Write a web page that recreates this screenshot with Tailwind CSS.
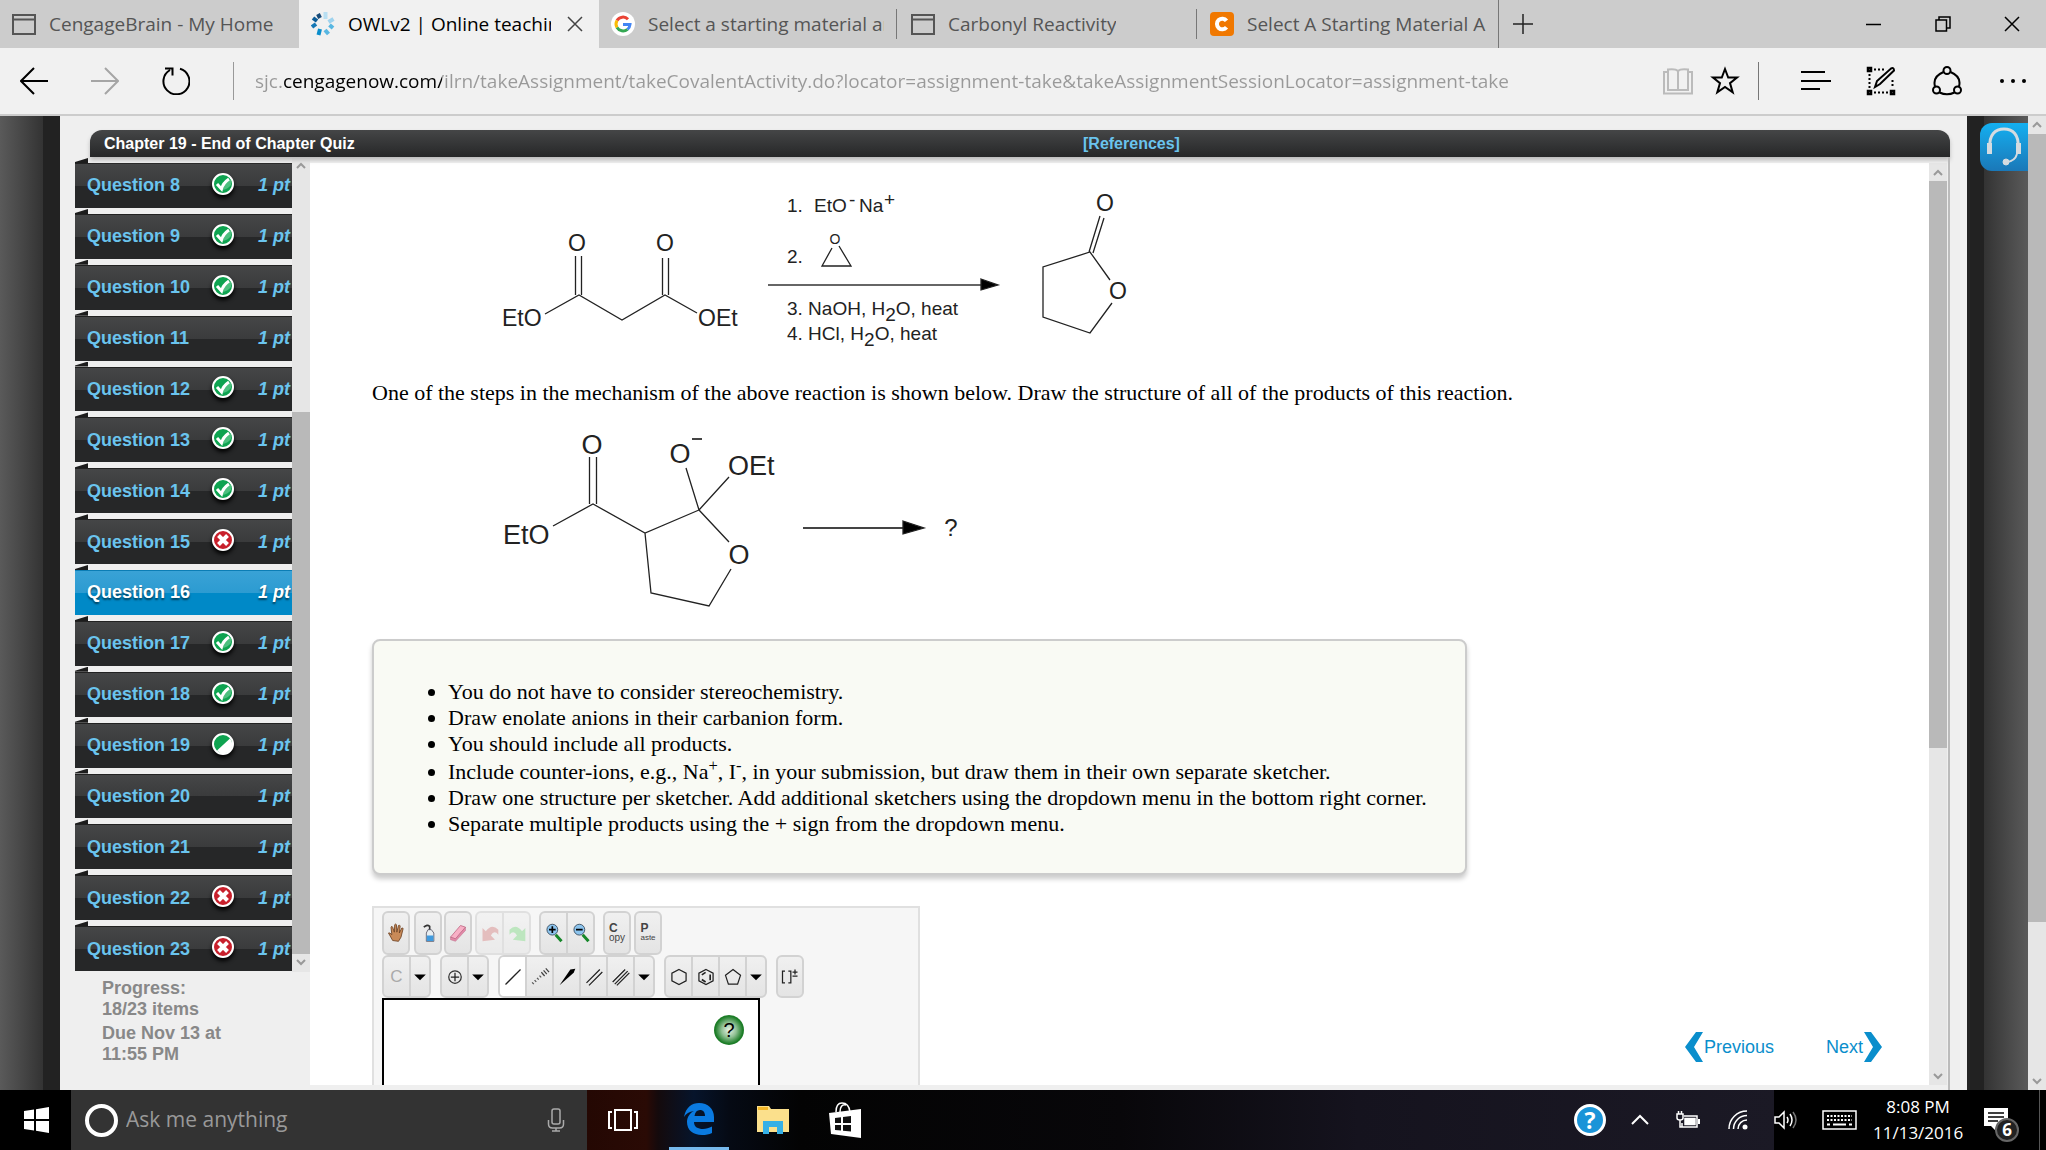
<!DOCTYPE html>
<html lang="en">
<head>
<meta charset="utf-8">
<title>OWLv2 | Online teaching and learning resource</title>
<script src="https://cdn.jsdelivr.net/npm/@tailwindcss/browser@4"></script>
</head>
<body class="h-screen flex flex-col overflow-hidden bg-[#efefef] font-['Liberation_Sans',sans-serif] text-black">

<!-- Tab strip -->
<nav aria-label="Tabs" class="flex h-12 shrink-0 bg-[#ccc] font-['Open_Sans',sans-serif] text-[19px] text-[#555]">
  <a href="#" class="flex w-[299px] items-center gap-[13px] pl-3 pr-4">
    <svg class="h-[22px] w-6 shrink-0" viewBox="0 0 24 22" fill="none" stroke="#555" stroke-width="2"><path d="M1 2h22v19H1zM1 6.500h22"/></svg>
    <span class="overflow-hidden whitespace-nowrap">CengageBrain - My Home</span>
  </a>
  <div class="flex w-[300px] items-center bg-[#f1f1f1] pl-3 pr-4 text-black">
    <a href="#" class="flex min-w-0 flex-1 items-center gap-[13px]">
      <svg class="h-6 w-6 shrink-0" viewBox="0 0 24 24"><g stroke-width="4"><path d="M14.500 0v7" stroke="#b9dff2"/><path d="M17.500 10l5-3" stroke="#9fd3ee"/><path d="M18.500 13l3.500 3" stroke="#58b7e2"/><path d="M14 18l3.500 4" stroke="#58b7e2"/><path d="M9 17l-1.500 6" stroke="#0a8ecc"/><path d="M1 15l4-3" stroke="#1577b5"/><path d="M2 6l4 3" stroke="#0b5c97"/><path d="M7 2l2 4" stroke="#164a78"/></g></svg>
      <span class="min-w-0 flex-1 overflow-hidden whitespace-nowrap">OWLv2 | Online teaching</span>
    </a>
    <button aria-label="Close tab" class="ml-4 shrink-0"><svg class="size-4" viewBox="0 0 16 16" stroke="#444" stroke-width="1.500"><path d="M1 1l14 14M15 1L1 15"/></svg></button>
  </div>
  <div class="flex w-[298px] items-center">
    <a href="#" class="flex min-w-0 flex-1 items-center gap-[13px] pl-3 pr-3">
      <svg class="size-6 shrink-0" viewBox="0 0 24 24" fill="none" stroke-width="3"><circle cx="12" cy="12" r="12" fill="#fff"/><path d="M17 7.200A7 7 0 0 0 6 8.500" stroke="#ea4335"/><path d="M6 8.500a7 7 0 0 0 0 7" stroke="#fbbc05"/><path d="M6 15.500a7 7 0 0 0 10.500 1.800" stroke="#34a853"/><path d="M16.500 17.300A7 7 0 0 0 19 12.500h-7" stroke="#4285f4"/></svg>
      <span class="overflow-hidden whitespace-nowrap">Select a starting material an</span>
    </a>
    <i class="h-[30px] w-px bg-[#777]"></i>
  </div>
  <div class="flex w-[300px] items-center">
    <a href="#" class="flex min-w-0 flex-1 items-center gap-[13px] pl-[14px] pr-3">
      <svg class="h-[22px] w-6 shrink-0" viewBox="0 0 24 22" fill="none" stroke="#555" stroke-width="2"><path d="M1 2h22v19H1zM1 6.500h22"/></svg>
      <span class="overflow-hidden whitespace-nowrap">Carbonyl Reactivity</span>
    </a>
    <i class="h-[30px] w-px bg-[#777]"></i>
  </div>
  <div class="flex w-[302px] items-center">
    <a href="#" class="flex min-w-0 flex-1 items-center gap-[13px] pl-[13px] pr-3">
      <svg class="size-6 shrink-0" viewBox="0 0 24 24"><rect width="24" height="24" rx="4" fill="#f07800"/><path d="M16.500 15.200A5.300 5.300 0 1 1 16.500 8.800" fill="none" stroke="#fff" stroke-width="4"/></svg>
      <span class="overflow-hidden whitespace-nowrap">Select A Starting Material An</span>
    </a>
    <i class="h-full w-px bg-[#777]"></i>
  </div>
  <button aria-label="New tab" class="pl-[14px]"><svg class="size-5" viewBox="0 0 20 20" stroke="#222" stroke-width="1.500"><path d="M0 10h20M10 0v20"/></svg></button>
  <div class="ml-auto flex items-center gap-[53px] pr-[26px]">
    <button aria-label="Minimize"><svg class="size-4" viewBox="0 0 16 16" stroke="#000" stroke-width="1.500"><path d="M0 8.500h15"/></svg></button>
    <button aria-label="Restore"><svg class="size-4" viewBox="0 0 16 16" fill="none" stroke="#000" stroke-width="1.500"><path d="M1 4h10.500v11H1zM4 4V1h11v11h-3.500"/></svg></button>
    <button aria-label="Close"><svg class="size-4" viewBox="0 0 16 16" stroke="#000" stroke-width="1.500"><path d="M1 1l14 14M15 1L1 15"/></svg></button>
  </div>
</nav>

<!-- Address bar -->
<div class="flex h-[68px] shrink-0 items-center border-b-2 border-[#ccc] bg-[#f1f1f1] pl-5 pr-5">
  <button aria-label="Back"><svg class="h-7 w-7" viewBox="0 0 28 28" fill="none" stroke="#000" stroke-width="2"><path d="M28 14H1M14 1L1 14l13 13"/></svg></button>
  <button aria-label="Forward" class="ml-[43px]"><svg class="h-7 w-7" viewBox="0 0 28 28" fill="none" stroke="#a5a5a5" stroke-width="2"><path d="M0 14h27M14 1l13 13-13 13"/></svg></button>
  <button aria-label="Refresh" class="ml-[43px]"><svg class="size-7" viewBox="0 0 28 28" fill="none" stroke="#000" stroke-width="2"><path d="M18 1.800A13 13 0 1 1 8 3M3 1.500h7.500v7"/></svg></button>
  <i class="ml-[43px] h-[38px] w-px bg-[#999]"></i>
  <input aria-label="Address" value="sjc.cengagenow.com/ilrn/takeAssignment/takeCovalentActivity.do?locator=assignment-take&amp;takeAssignmentSessionLocator=assignment-take" class="ml-[21px] min-w-0 flex-1 bg-[linear-gradient(90deg,#999_0_28px,#000_28px_187px,#999_187px)] bg-clip-text font-['Open_Sans',sans-serif] text-[19px] text-transparent outline-none">
  <button aria-label="Reading view"><svg class="h-7 w-[30px]" viewBox="0 0 30 28" fill="none" stroke="#bbb" stroke-width="2"><path d="M15 4c-2-2-6-2-10-1.500V23h20V2.500C21 2 17 2 15 4v19M5 5H1v21.500h28V5h-4"/></svg></button>
  <button aria-label="Favorites" class="ml-[17px]"><svg class="h-[30px] w-[30px]" viewBox="0 0 30 30" fill="none" stroke="#000" stroke-width="2"><path d="M15 3l3.200 8.500H27l-7 5.600 2.700 9.300L15 21l-7.700 5.400L10 17.100l-7-5.600h8.800z"/></svg></button>
  <i class="ml-[18px] h-[38px] w-px bg-[#777]"></i>
  <button aria-label="Hub" class="ml-[42px]"><svg class="h-6 w-[30px]" viewBox="0 0 30 24" stroke="#000" stroke-width="2"><path d="M0 3h24M0 12h30M0 20h19"/></svg></button>
  <button aria-label="Make a web note" class="ml-[35px]"><svg class="h-[30px] w-[30px]" viewBox="0 0 30 30" fill="none" stroke="#000"><path d="M8 3.500h10M3.500 8v14M8 26.500h14M26.500 14v8" stroke-width="2" stroke-dasharray="2 2"/><g stroke-width="2.500"><path d="M2 2h3v3H2zM2 25h3v3H2zM25 25h3v3h-3z"/></g><path d="M9 21l2-6L25 2.500q3-1.500 3 2L14 18z" stroke-width="2"/></svg></button>
  <button aria-label="Share" class="ml-9"><svg class="h-[30px] w-[30px]" viewBox="0 0 30 30" fill="none" stroke="#000" stroke-width="2"><circle cx="15" cy="4.500" r="3.500"/><circle cx="4.500" cy="24" r="3.500"/><circle cx="25.500" cy="24" r="3.500"/><path d="M11.500 6C3 9.500 1.500 15 3 20.500M18.500 6C27 9.500 28.500 15 27 20.500M7.500 26.500q7.500 3.500 15 0"/></svg></button>
  <button aria-label="More" class="ml-[38px]"><svg class="h-1 w-[26px]" viewBox="0 0 26 4"><circle cx="2" cy="2" r="2"/><circle cx="13" cy="2" r="2"/><circle cx="24" cy="2" r="2"/></svg></button>
</div>

<main class="flex min-h-0 flex-1">
  <div class="w-[43px] bg-[linear-gradient(90deg,#5a5a5a,#4b4b4b_40%,#333)]"></div>
  <div class="w-[17px] bg-[#222]"></div>

  <section class="flex min-w-0 flex-1 flex-col bg-[#efefef] pl-[15px] pr-[17px] pt-[14px]">
    <div class="relative ml-[15px] flex h-[27px] shrink-0 items-center rounded-t-xl bg-linear-to-b from-[#454647] to-[#262728] px-[14px] text-[16px] font-bold text-white shadow-[0_3px_4px_#bbb]">
      <h1>Chapter 19 - End of Chapter Quiz</h1>
      <a href="#" class="absolute left-[993px] text-[#6ac4ee]">[References]</a>
    </div>

    <div class="flex min-h-0 flex-1">
      <aside class="flex w-[235px] shrink-0 flex-col pt-px">
        <div class="flex h-[814px] shrink-0">
          <ol id="questions" class="flex flex-1 flex-col"></ol>
          <div aria-hidden="true" class="flex w-[18px] flex-col items-center bg-[#e6e6e6]">
            <svg class="h-[18px] w-[10px]" viewBox="0 0 10 18" fill="none" stroke="#999" stroke-width="2"><path d="M1 10l4-4 4 4"/></svg>
            <i class="mt-[236px] w-full flex-1 bg-[#b9b9b9]"></i>
            <svg class="h-[18px] w-[10px]" viewBox="0 0 10 18" fill="none" stroke="#999" stroke-width="2"><path d="M1 6l4 4 4-4"/></svg>
          </div>
        </div>
        <div class="mt-[6px] space-y-[3px] pl-[27px] text-[18px] font-bold leading-[21px] text-[#888]">
          <p>Progress:<br>18/23 items</p>
          <p>Due Nov 13 at<br>11:55 PM</p>
        </div>
      </aside>

      <div class="mb-[5px] mt-[6px] flex min-w-0 flex-1 flex-col overflow-hidden bg-white pl-[62px] pt-4 font-['Liberation_Serif',serif] text-[22px]">
        <svg role="img" aria-label="Reaction scheme" class="ml-[108px] h-[180px] w-[680px] shrink-0 font-['Liberation_Sans',sans-serif] text-[23px]" viewBox="0 0 680 180" fill="none" stroke="#222" stroke-width="1.300">
          <path d="M95.500 77v39M101.500 77v39M182.500 79v37M188.500 79v37M65 135l34-19 43 25 43-25 32 18M352 69l-10 18h29l-12-20M609 73l11-36M613 74l11-35M630 101L610 73l-47 15v50l47 16 22-30"/>
          <path d="M288 106h214" stroke="#666" stroke-width="2"/>
          <path d="M501 100l17 6-17 5z" fill="#000"/>
          <g fill="#222" stroke="none">
            <g text-anchor="middle"><text x="97" y="72">O</text><text x="185" y="72">O</text><text x="625" y="32">O</text><text x="638" y="120">O</text><text x="355" y="65" class="text-[14px]">O</text></g>
            <text x="22" y="147">EtO</text><text x="218" y="147">OEt</text>
            <g class="text-[19px]">
              <text x="307" y="33">1.</text><text x="334" y="33">EtO</text><text x="369" y="27">-</text><text x="379" y="33">Na</text><text x="404" y="27">+</text>
              <text x="307" y="84">2.</text>
              <text x="307" y="136">3. NaOH, H<tspan dy="6">2</tspan><tspan dy="-6">O, heat</tspan></text>
              <text x="307" y="161">4. HCl, H<tspan dy="6">2</tspan><tspan dy="-6">O, heat</tspan></text>
            </g>
          </g>
        </svg>

        <p class="mt-5 shrink-0 whitespace-nowrap leading-7">One of the steps in the mechanism of the above reaction is shown below. Draw the structure of all of the products of this reaction.</p>

        <svg role="img" aria-label="Mechanism step" class="ml-[108px] mt-3 h-[200px] w-[520px] shrink-0 font-['Liberation_Sans',sans-serif] text-[27px]" viewBox="0 50 520 200" fill="none" stroke="#222" stroke-width="1.300">
          <path d="M109.500 88v47M116.500 88v47M73 157l40-22 52 29 54-23-13-42M219 141l30-33M219 141l30 32M251 200l-22 37-58-13-6-60"/>
          <path d="M212 70h10M323 159h105" stroke="#444" stroke-width="2"/>
          <path d="M423 152l21 7-21 6z" fill="#000"/>
          <g fill="#222" stroke="none">
            <g text-anchor="middle"><text x="112" y="85">O</text><text x="200" y="94">O</text><text x="259" y="195">O</text><text x="471" y="167" class="text-[24px]">?</text></g>
            <text x="23" y="175">EtO</text><text x="248" y="106">OEt</text>
          </g>
        </svg>

        <div class="mt-5 h-[236px] w-[1095px] shrink-0 rounded-lg border-2 border-[#ccc] bg-[#f9faf4] pt-[38px] shadow-[0_4px_5px_#ccc]">
          <ul class="list-disc whitespace-nowrap pl-[74px] leading-[26px]">
            <li>You do not have to consider stereochemistry.</li>
            <li>Draw enolate anions in their carbanion form.</li>
            <li>You should include all products.</li>
            <li class="pt-[2px]">Include counter-ions, e.g., Na<sup>+</sup>, I<sup>-</sup>, in your submission, but draw them in their own separate sketcher.</li>
            <li>Draw one structure per sketcher. Add additional sketchers using the dropdown menu in the bottom right corner.</li>
            <li>Separate multiple products using the + sign from the dropdown menu.</li>
          </ul>
        </div>

        <div class="mt-[31px] flex min-h-0 flex-1 items-start justify-between font-['Liberation_Sans',sans-serif]">
          <div class="flex h-full w-[548px] flex-col border-x-2 border-t-2 border-[#e0e0e0] bg-[#f6f6f6] pl-2 pt-[3px]">
            <div class="flex h-11" id="row1"></div>
            <div class="flex h-[43px] gap-[9px]" id="row2"></div>
            <div class="flex w-[378px] flex-1 items-start justify-end border-x-2 border-t-2 border-black bg-white pr-[14px] pt-[15px]">
              <button aria-label="Help" class="size-[30px] rounded-full bg-[radial-gradient(circle,#e8f3e8_0,#8fc093_35%,#1c7d27_65%)] text-[20px] leading-[30px]">?</button>
            </div>
          </div>
          <div class="mr-[47px] mt-[125px] flex h-[32px] items-center gap-[52px] text-[18px] text-[#0a8ecc]">
            <a href="#" class="flex items-center gap-px"><svg class="h-[30px] w-[18px]" viewBox="0 0 18 30" fill="#0a8ecc"><path d="M0 15L11 0h7L9 15l9 15h-7z"/></svg><span>Previous</span></a>
            <a href="#" class="flex items-center gap-px"><span>Next</span><svg class="h-[30px] w-[18px]" viewBox="0 0 18 30" fill="#0a8ecc"><path d="M18 15L7 0H0l9 15-9 15h7z"/></svg></a>
          </div>
        </div>
      </div>

      <div aria-hidden="true" class="mb-[5px] mt-[6px] flex w-[18px] shrink-0 flex-col items-center bg-[#e6e6e6]">
        <svg class="h-[18px] w-[10px]" viewBox="0 0 10 18" fill="none" stroke="#999" stroke-width="2"><path d="M1 12l4-4 4 4"/></svg>
        <i class="h-[567px] w-full bg-[#b9b9b9]"></i>
        <svg class="mt-auto h-[18px] w-[10px]" viewBox="0 0 10 18" fill="none" stroke="#999" stroke-width="2"><path d="M1 7l4 4 4-4"/></svg>
      </div>
      <div class="w-[3px] border-r-2 border-[#bbb]"></div>
    </div>
  </section>

  <div class="w-[17px] bg-[#222]"></div>
  <div class="flex w-11 items-start bg-[linear-gradient(90deg,#333,#4b4b4b_60%,#5a5a5a)] pt-[7px]">
    <button aria-label="Support" class="relative -ml-1 flex h-12 w-12 shrink-0 items-center justify-center rounded-l-xl bg-linear-to-b from-[#13aff0] to-[#1a78b8]">
      <svg class="h-10 w-9" viewBox="0 0 36 40" fill="none" stroke="#d5dbe0" stroke-width="3"><path d="M4 20C3 8 9 2 18 2s15 6 14 18"/><path d="M3.500 16v11M32.500 16v11" stroke-width="5"/><path d="M31 27q-2 7-10 8" stroke-width="2"/><circle cx="20" cy="35" r="3" fill="#d5dbe0" stroke-width="1"/></svg>
    </button>
  </div>
  <div aria-hidden="true" class="flex w-[18px] flex-col items-center bg-[#e6e6e6]">
    <svg class="h-[18px] w-[10px]" viewBox="0 0 10 18" fill="none" stroke="#999" stroke-width="2"><path d="M1 11l4-4 4 4"/></svg>
    <i class="h-[788px] w-full bg-[#b9b9b9]"></i>
    <svg class="mt-auto h-[18px] w-[10px]" viewBox="0 0 10 18" fill="none" stroke="#999" stroke-width="2"><path d="M1 7l4 4 4-4"/></svg>
  </div>
</main>

<!-- Taskbar -->
<footer class="flex h-[60px] shrink-0 bg-black font-['Open_Sans',sans-serif] text-white">
  <button aria-label="Start" class="flex w-[71px] items-center pl-6"><svg class="size-[26px]" viewBox="0 0 26 26" fill="#fff"><path d="M0 4l10-1.500V12H0zM12 2.200L25 0v12H12zM0 14h10v9.500L0 22zM12 14h13v12l-13-2.200z"/></svg></button>
  <label class="flex w-[516px] items-center bg-[#333] pl-[14px] pr-[22px]">
    <i class="size-[33px] rounded-full border-4 border-white"></i>
    <input aria-label="Search" placeholder="Ask me anything" class="ml-2 min-w-0 flex-1 bg-transparent text-[21px] outline-none placeholder:text-[#999]">
    <svg class="h-6 w-[18px]" viewBox="0 0 18 24" fill="none" stroke="#aaa" stroke-width="1.500"><rect x="5" y="1" width="8" height="15" rx="2"/><path d="M1.500 12v4q0 4 4 4h7q4 0 4-4v-4M9 20v3M5 23h8"/></svg>
  </label>
  <div class="flex flex-1 items-center bg-[linear-gradient(90deg,#240803_0,#2a0a05_5%,#140a0c_6%,#06142b_9%,#050a14_12%,#030303_18%,#08070a_45%,#15131e_65%,#1b1925_100%)] pl-[21px]">
    <button aria-label="Task view"><svg class="h-[22px] w-[30px]" viewBox="0 0 30 22" fill="none" stroke="#fff" stroke-width="2"><path d="M7 1h16v20H7zM4 3H1v16h3M26 3h3v16h-3"/></svg></button>
    <button aria-label="Microsoft Edge" class="ml-[31px] flex h-full w-[60px] items-center justify-center border-b-[3px] border-[#76b9ed]"><svg class="h-8 w-[30px]" viewBox="0 0 30 32" fill="#0a7ae0"><path d="M0 14C2 4 8 0 15 0c9 0 15 6 15 14v5H10c0 5 4 7 9 7 3 0 6-1 9-2.500V30c-3 1.500-6 2-10 2C9 32 3 27 3 19c0-5 3-9 7-11-5 .5-8 3-10 6zm10.500-1H21c0-4-2-6-5-6s-5 2-5.500 6z"/></svg></button>
    <button aria-label="File Explorer" class="ml-7"><svg class="h-7 w-8" viewBox="0 0 32 28"><path d="M0 0h12l2 3h18v23H0z" fill="#fbe08c"/><path d="M1 1h10v3H1z" fill="#f4b728"/><path d="M6 28V15h20v13h-6v-7h-8v7z" fill="#35b0e6"/></svg></button>
    <button aria-label="Store" class="ml-10"><svg class="h-9 w-8" viewBox="0 0 32 36"><path d="M7 10C7 3 10 1 13 1s7 1 8 9M11 10c0-5 2-8 6-7" fill="none" stroke="#fff" stroke-width="1.500"/><path d="M0 11l32-4v29L2 32z" fill="#fff"/><path d="M6 16l6-.8V21H6zM14 15l8-1v7h-8zM6 23h6v5.500L6 28zM14 23h8v6.500l-8-.7z" fill="#111"/></svg></button>
    <button aria-label="Help" class="ml-auto mr-[25px] flex size-8 items-center justify-center rounded-full border-[3px] border-white bg-[#1a94d8] text-[23px] font-bold leading-none">?</button>
    <button aria-label="Hidden icons" class="mr-[27px]"><svg class="h-3 w-[18px]" viewBox="0 0 18 12" fill="none" stroke="#fff" stroke-width="2"><path d="M1 10l8-8 8 8"/></svg></button>
    <button aria-label="Battery" class="mr-7"><svg class="h-[18px] w-6" viewBox="0 0 24 18" fill="none" stroke="#fff" stroke-width="1.500"><path d="M8 5h13v11H6v-4M1 3h6v4q0 2-3 2T1 7zM2.500 0v3M5.500 0v3M4 9v7h3"/><path d="M9 7.500h10v6H9z" fill="#fff"/><path d="M23 8v5" stroke-width="2"/></svg></button>
    <button aria-label="Network" class="mr-[26px]"><svg class="size-5" viewBox="0 0 20 20" fill="none" stroke="#fff" stroke-width="1.500"><path d="M1 19A18 18 0 0 1 19 1M5.500 19A13.500 13.500 0 0 1 19 5.500M10 19a9 9 0 0 1 9-9"/><circle cx="17" cy="17" r="2.500" fill="#fff" stroke="none"/></svg></button>
  </div>
  <div class="flex items-center">
    <button aria-label="Volume" class="mr-6"><svg class="h-5 w-6" viewBox="0 0 24 20" fill="none" stroke="#fff" stroke-width="1.500"><path d="M1 7h4l5-5v16l-5-5H1zM13 7q2 3 0 6M16 4q4 6 0 12"/><path d="M19 2q6 8 0 16" stroke="#777"/></svg></button>
    <button aria-label="Touch keyboard" class="mr-4"><svg class="h-5 w-[35px]" viewBox="0 0 35 20" fill="none" stroke="#fff" stroke-width="1.500"><path d="M1 1h33v18H1z"/><path d="M5 6h25M5 10h25" stroke-width="2" stroke-dasharray="2 1.500"/><path d="M5 14.500h3M11 14.500h13M27 14.500h3" stroke-width="2"/></svg></button>
    <time class="w-[90px] text-center text-[17px] leading-[26px]">8:08 PM<br>11/13/2016</time>
    <button aria-label="6 notifications" class="relative ml-[21px] mr-[31px]"><svg class="h-6 w-6" viewBox="0 0 24 24"><path d="M0 0h24v18H13v6l-6-6H0z" fill="#fff"/><path d="M4 5h16M4 9h16M4 13h10" stroke="#000" stroke-width="1.500"/></svg><span class="absolute left-[11px] top-[10px] flex size-6 items-center justify-center rounded-full border-2 border-[#666] bg-[#222] text-[17px] font-bold">6</span></button>
    <i class="mr-[6px] h-full w-px bg-[#555]"></i>
  </div>
</footer>

<script>
const ok = '<circle cx="12" cy="11" r="10" fill="#0ea350" stroke="#fff" stroke-width="2"/><path d="M13 11l7-5v6q-3 4-8 5z" fill="#4cbf7e"/><path d="M6 11l4.500 5Q12 10 18 6" fill="none" stroke="#fff" stroke-width="3"/>';
const no = '<circle cx="12" cy="11" r="10" fill="#c8202c" stroke="#fff" stroke-width="2"/><path d="M7.500 6.500l9 9M16.500 6.500l-9 9" stroke="#fff" stroke-width="4"/>';
const half = '<circle cx="12" cy="11" r="10" fill="#0ea350" stroke="#fff" stroke-width="2"/><path d="M19 5.500A8.500 8.500 0 0 1 6 17.500z" fill="#fff"/>';
const states = [ok, ok, ok, '', ok, ok, ok, no, '', ok, ok, half, '', '', no, no];
document.getElementById('questions').innerHTML = states.map((s, i) => {
  const n = i + 8, current = n === 16;
  const skin = current
    ? 'bg-[linear-gradient(#39a2d6,#2c9bd1_50%,#0089c7_50%)] text-white border-[#0b7db5] [text-shadow:0_2px_2px_#0008]'
    : 'bg-[linear-gradient(#454647,#3a3b3c_50%,#262728_50%)] text-[#6ac4ee] border-[#222]';
  return `<li class="flex min-h-0 flex-1 flex-col pb-px"><i class="h-[5px] w-[13px] bg-[#1c1c1c] [clip-path:polygon(0_80%,100%_0,100%_100%,0_100%)]"></i>
  <a href="#" class="flex min-h-0 flex-1 items-center border-t pl-3 pr-[2px] text-[18px] font-bold ${skin}"><span class="w-[124px]">Question ${n}</span>
  <svg class="h-[26px] w-6 drop-shadow-[0_3px_2px_#000]" viewBox="0 0 24 26">${s}</svg><em class="ml-auto">1 pt</em></a></li>`;
}).join('');

const stroke = (d, w = 1.5) => `<path d="${d}" fill="none" stroke="#222" stroke-width="${w}"/>`;
const icon = {
  hand: '<path d="M6 21L1 12q1-1 4 2L4 5q1-2 2 0l2 6 .500-9q1-1.500 2 0l.500 9 2-8q1.500-1 2 .500L14 12l3-6q1.500-.500 1.500 1L16 17l-3 5z" fill="#c98a58" stroke="#6b4020"/>',
  bottle: '<path d="M5 5q4-4 7-1v5" fill="none" stroke="#333" stroke-width="2"/><path d="M10 8h4l3 4v10H8V12z" fill="#e8eef2" stroke="#556"/><path d="M8.500 15h8v6.500h-8z" fill="#3f9ade"/>',
  eraser: '<path d="M1 17L13 3l6 2-12 14z" fill="#f8b0c6" stroke="#c06a86"/><path d="M1 17l6 2L19 5v4L7 22l-6-2z" fill="#e389a8" stroke="#b0607c" stroke-width=".500"/>',
  undo: '<path d="M1 22V6l4 4Q12 0 20 8v6q-5-6-9 1l5 5z" fill="#d99a9a"/>',
  redo: '<path d="M20 22V6l-4 4Q9 0 1 8v6q5-6 9 1l-5 5z" fill="#98dc9c"/>',
  zin: '<path d="M12 14l7 8" stroke="#16872a" stroke-width="3.500"/><circle cx="8" cy="8" r="6.500" fill="#8cc4ee" stroke="#345"/><path d="M4 8h8M8 4v8" stroke="#000" stroke-width="2"/>',
  zout: '<path d="M12 14l7 8" stroke="#16872a" stroke-width="3.500"/><circle cx="8" cy="8" r="6.500" fill="#8cc4ee" stroke="#345"/><path d="M4 8h8" stroke="#000" stroke-width="2"/>',
  down: '<path d="M3 9h14l-7 7z"/>',
  plus: '<circle cx="10" cy="12" r="7.500" fill="none" stroke="#333" stroke-width="1.500"/>' + stroke('M5 12h10M10 7v10'),
  line: stroke('M1 21L19 3'),
  dash: '<path d="M1 20L13 9" stroke="#555" stroke-width="3" stroke-dasharray="1.500 2.500"/><path d="M13 9l7-6" stroke="#444" stroke-width="6" stroke-dasharray="1.500 2"/>',
  wedge: '<path d="M1 22L14 3l6-1-2 5z"/>',
  dbl: stroke('M1 19L17 3M4 22L20 6'),
  tri: stroke('M0 18L15 3M2.500 20.500L18 5M5 22L20 7'),
  hex: stroke('M10 3l8.500 4.500v9L10 21l-8.500-4.500v-9z'),
  benz: stroke('M10 3l8.500 4.500v9L10 21l-8.500-4.500v-9z') + stroke('M15 9v7M9.500 6.500l-4.500 3M5 15l4.500 3', 2),
  pent: stroke('M10 3l9 7-3.500 10.500h-11L1 10z')
};
const pic = n => `<svg class="size-5 overflow-visible" viewBox="0 0 20 24">${icon[n]}</svg>`;
// Each group is a margin class and a list of [label, content, cell class].
const W = 'w-[27px]', N = 'w-[20px]';
const group = (margin, items) => `<div class="flex overflow-hidden rounded-md border-2 border-[#d2d2d2] bg-linear-to-b from-[#f0f0f0] to-[#e4e4e4] ${margin}">` +
  items.map(([label, body, cell], i) => `<button aria-label="${label}" class="flex items-center justify-center ${cell} ${i ? 'border-l-2 border-[#d2d2d2]' : ''}">${body}</button>`).join('') + '</div>';
document.getElementById('row1').innerHTML =
  group('mr-1', [['Pan', pic('hand'), 'w-[24px]']]) +
  group('mr-[2px]', [['Clear', pic('bottle'), 'w-[24px]']]) +
  group('mr-[3px]', [['Erase', pic('eraser'), 'w-[24px]']]) +
  group('mr-2 opacity-60', [['Undo', pic('undo'), 'w-[25px]'], ['Redo', pic('redo'), W]]) +
  group('mr-2', [['Zoom in', pic('zin'), 'w-[25px]'], ['Zoom out', pic('zout'), W]]) +
  group('mr-[3px]', [['Copy', '<span class="text-left text-[10px] leading-[10px] text-[#444]"><b class="block text-[12px]">C</b>opy</span>', 'w-[24px]']]) +
  group('', [['Paste', '<span class="text-left text-[8px] leading-[10px] text-[#444]"><b class="block text-[12px]">P</b>aste</span>', 'w-[24px]']]);
document.getElementById('row2').innerHTML =
  group('', [['Element', '<span class="text-[17px] text-[#aaa]">C</span>', 'w-[25px]'], ['More elements', pic('down'), N]]) +
  group('', [['Charge', pic('plus'), 'w-[25px]'], ['More charges', pic('down'), N]]) +
  group('', [['Single bond', pic('line'), 'w-[25px] bg-white'], ['Hashed bond', pic('dash'), W], ['Wedge bond', pic('wedge'), W], ['Double bond', pic('dbl'), W], ['Triple bond', pic('tri'), W], ['More bonds', pic('down'), N]]) +
  group('', [['Cyclohexane', pic('hex'), 'w-[25px]'], ['Benzene', pic('benz'), W], ['Cyclopentane', pic('pent'), W], ['More rings', pic('down'), N]]) +
  group('', [['Bracket', '<svg class="size-5 overflow-visible" viewBox="0 0 20 24">' + stroke('M4 5H1v14h3M8 5h3v14H8M13 6h6M16 3v6M13 11h6') + '</svg>', 'w-[24px]']]);
</script>
</body>
</html>
